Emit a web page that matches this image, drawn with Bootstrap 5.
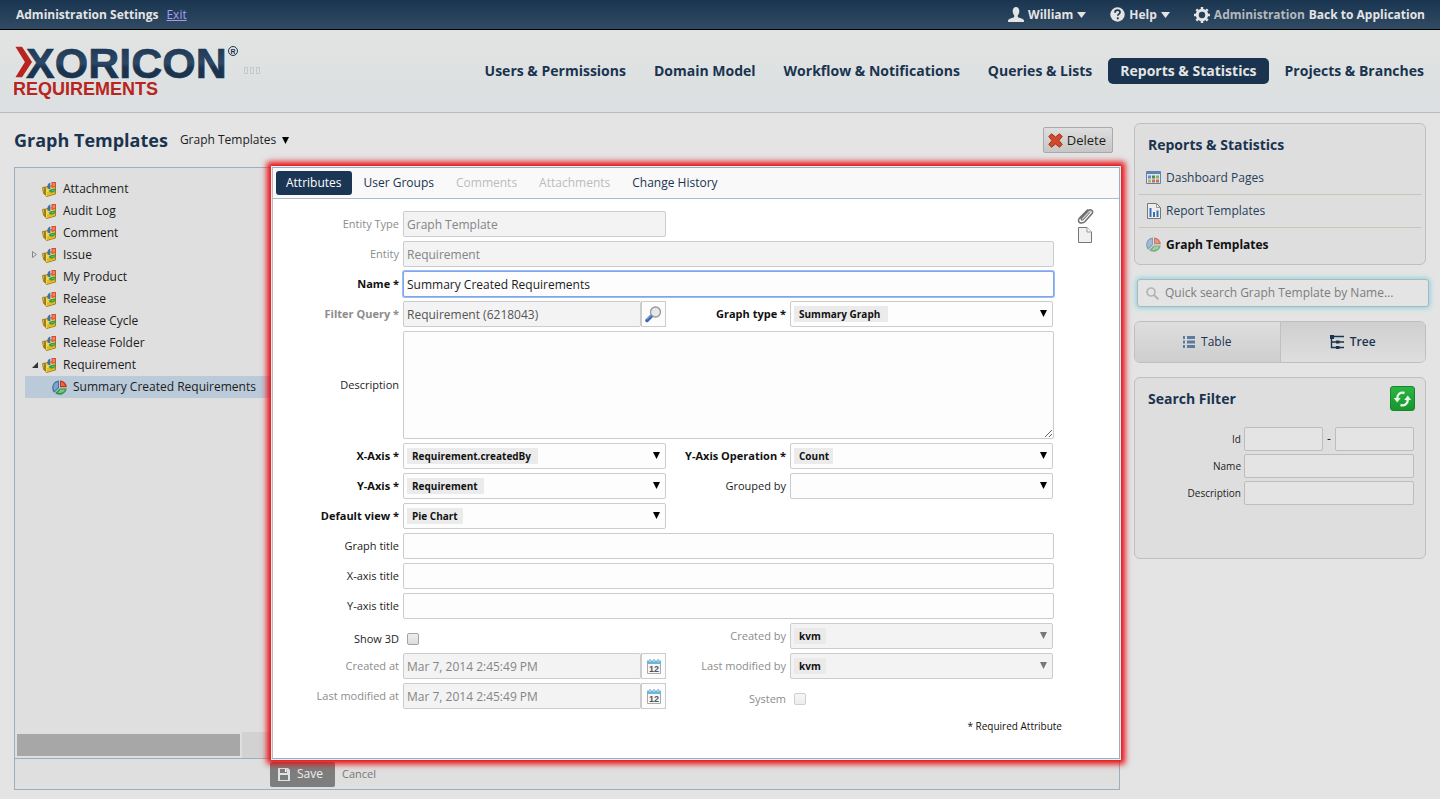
<!DOCTYPE html>
<html lang="en">
<head>
<meta charset="utf-8">
<meta name="viewport" content="width=device-width, initial-scale=1">
<title>Graph Templates</title>
<link href="https://cdn.jsdelivr.net/npm/bootstrap@5.3.0/dist/css/bootstrap.min.css" rel="stylesheet">
<style>
  :root { --navy:#1a3450; --line:#9bafbe; --edge:#bfbfbf; }
  body { font-family:"Open Sans","Noto Sans",sans-serif; font-size:12px; line-height:18px; background:#e4e4e4; color:#1c1c1c; }
  a { text-decoration:none; color:inherit; }
  button { font-family:inherit; }
  svg { flex:none; display:block; }

  .top-strip { height:30px; padding:0 15px 0 16px; font-weight:700; color:#e4e4e4; background:linear-gradient(#1a3550,#314b64); border-bottom:1px solid #000; }
  .exit-link { color:#a79df0; text-decoration:underline; font-weight:400; }
  .menu-btn { border:0; background:none; padding:0; color:inherit; font-weight:700; font-size:12px; line-height:18px; }
  .dim { color:#b5b9bd; }

  .masthead { height:83px; padding:0 4px 0 14px; background:linear-gradient(#e2e4e2,#dbdfe1); border-bottom:1px solid #b9babb; }
  .main-nav { gap:4px; }
  .main-nav .nav-link { padding:3px 12px; font-size:14px; line-height:20px; font-weight:700; color:var(--navy); border-radius:5px; white-space:nowrap; }
  .main-nav .nav-link.active { background:var(--navy); color:#e4e4e4; }

  .page-body { padding:0 14px 9px; gap:14px; }
  .title-row { height:54px; padding-right:7px; gap:12px; }
  .page-title { font-size:18px; line-height:24px; font-weight:700; color:var(--navy); margin:0; }
  .crumb-btn { border:0; background:none; padding:0; color:#1c1c1c; font-size:12px; line-height:18px; gap:6px; }
  .delete-btn { height:26px; padding:0 6px 0 4px; gap:4px; border:1px solid #a9a9a9; border-radius:2px; background:linear-gradient(#dedede,#c6c6c6); color:#1c1c1c; font-size:13px; }

  .workspace { border:1px solid var(--line); background:#dfdfdf; }
  .panes { min-height:590px; }
  .tree-pane { width:257px; }
  .tree-list { padding:10px 0 0 10px; }
  .tree-item { height:22px; gap:6px; padding-left:3px; white-space:nowrap; }
  .tree-item .twist { width:11px; margin-right:-3px; }
  .tree-item.leaf { padding-left:27px; background:#bacad9; }
  .scroll-track { height:26px; padding:2px; }
  .scroll-thumb { width:223px; height:22px; background:#a7a7a7; }
  .scroll-rest { background:#d2d2d2; margin:-2px -2px -2px 2px; }

  .editor { position:relative; z-index:1; margin:-1px -1px -1px 0; border:1px solid var(--line); border-left-color:#bbb; background:#fff; box-shadow:0 0 0 1px #e8eef2, 0 0 6px 5px #e80a0e; }
  .tab-strip { height:31px; padding:3px; gap:2px; background:#f9f9f9; border-bottom:1px solid #a9bdcb; }
  .tab-strip .nav-link { height:24px; padding:3px 10px; color:var(--navy); border-radius:3px; font-size:12px; line-height:18px; }
  .tab-strip .nav-link.active { background:#1b3654; color:#fff; }
  .tab-strip .nav-link.disabled { color:#bcbcbc; }
  .form-area { padding:12px 24px 12px 0; gap:23px; }
  .entry-grid { display:grid; grid-template-columns:130px minmax(0,263fr) 124px minmax(0,264fr); row-gap:4px; align-items:center; }
  .entry-grid label { font-size:11px; line-height:16px; text-align:right; padding-right:4px; color:#1c1c1c; white-space:nowrap; }
  .entry-grid label.req { font-weight:700; color:#111; }
  .entry-grid label.off { color:#8c8c8c; }
  .wide { grid-column:2 / -1; }
  .first { grid-column:1; }
  .box { width:100%; height:26px; border:1px solid #ccc; border-radius:2px; padding:2px 3px; background-color:#fdfdfd; font-size:12px; line-height:18px; color:#1c1c1c; }
  textarea.box { height:108px; display:block; }
  .box.locked { background-color:#f3f3f3; color:#858585; opacity:1; }
  .box.query { color:#555; }
  .box.focused, .box.focused:focus { border-color:#7da6ee; box-shadow:0 0 0 1px #9dbcf3; outline:0; }
  select.box { appearance:none; padding:0 20px 0 8px; font-size:10px; font-weight:700; color:#111; opacity:1;
    background-image:url("data:image/svg+xml,%3Csvg xmlns='http://www.w3.org/2000/svg' width='7' height='8'%3E%3Cpath d='M0 1h7L3.500 8z' fill='%23000'/%3E%3C/svg%3E"),linear-gradient(#ebebeb,#ebebeb);
    background-repeat:no-repeat; background-position:right 5px top 7px,3px 4px; background-size:7px 8px,var(--chip,0) 16px; }
  select.box.locked { color:#111; background-image:url("data:image/svg+xml,%3Csvg xmlns='http://www.w3.org/2000/svg' width='7' height='8'%3E%3Cpath d='M0 1h7L3.500 8z' fill='%23777'/%3E%3C/svg%3E"),linear-gradient(#eaeaea,#eaeaea); }
  .short { margin-right:1px; width:auto; }
  .side-btn { width:25px; height:26px; padding:0; border:1px solid #ccc; background:#fcfcfc; flex:none; }
  .tick { appearance:none; display:block; width:12px; height:12px; margin:6px 0 0 4px; border:1px solid #a3a3a3; border-radius:2px; background:linear-gradient(#eee,#dcdcdc); }
  .tick.off { border-color:#cfcfcf; background:linear-gradient(#f7f7f7,#ededed); }
  .low { padding-top:6px; }
  .note { font-size:10px; line-height:16px; text-align:right; margin:9px -8px 0 0; color:#111; }
  .side-tools { margin-top:-3px; gap:3px; }
  .icon-btn { border:0; background:none; padding:0; }

  .action-bar { height:31px; border-top:1px solid var(--line); padding-left:255px; }
  .save-btn { height:25px; width:65px; padding:0 8px; gap:7px; border:0; border-radius:2px; background:#7d7d7d; color:#eee; font-size:12px; }
  .cancel-link { color:#777; font-size:11px; margin-left:7px; }

  .side-col { width:292px; padding-top:10px; gap:14px; flex:none; }
  .panel { border:1px solid var(--edge); border-radius:6px; background:#dedede; }
  .panel h2 { font-size:14px; line-height:20px; font-weight:700; color:var(--navy); margin:0; }
  .menu-panel { padding:11px 3px 3px; }
  .menu-panel h2 { padding-left:10px; margin-bottom:7px; }
  .side-link { height:33px; gap:5px; padding-left:8px; font-size:12px; color:#27415a; border-bottom:1px solid #c6c6b9; }
  .side-link:last-child { border-bottom:0; }
  .side-link.current { font-weight:700; color:#111; }
  .quick { margin:0 -3px 0 3px; height:28px; padding:0 8px; gap:6px; border:1px solid #b5b5b5; border-radius:3px; background:#e4e4e4; box-shadow:0 0 5px 1px #7ed6e2; }
  .quick input { flex:1; min-width:0; border:0; background:none; padding:0; outline:0; font-size:12px; }
  .quick input::placeholder { color:#7d7d7d; opacity:1; }
  .switcher { height:42px; overflow:hidden; }
  .switcher button { border:0; flex:1; gap:6px; font-size:12px; color:var(--navy); background:linear-gradient(#dedede,#cecece); }
  .switcher button + button { border-left:1px solid #c0c0c0; background:linear-gradient(#cfcfcf,#dedede); font-weight:600; }
  .filter { height:182px; padding:8px 11px 8px 13px; }
  .filter-grid { display:grid; grid-template-columns:96px minmax(0,1fr); row-gap:3px; margin-top:16px; align-items:center; }
  .filter-grid label { font-size:10px; line-height:16px; text-align:right; padding-right:3px; }
  .filter-grid input { width:100%; min-width:0; height:24px; border:1px solid #bdbdbd; border-radius:2px; background:#e4e4e4; padding:0 3px; }
  .refresh-btn { width:25px; height:25px; padding:0; margin-right:-1px; border:1px solid #17862a; border-radius:3px; background:linear-gradient(#2bb544,#17972c); }
</style>
</head>
<body>
<svg width="0" height="0" class="position-absolute" aria-hidden="true">
  <defs>
    <symbol id="folder" viewBox="0 0 15 15">
      <path d="M.5 5.500 2.500 5v7.500L1.500 11z" fill="#e8c75a" stroke="#a37c14"/>
      <path d="M3.500 5 13.500 3v9L4.500 14.500l-1-1z" fill="#f0d75e" stroke="#a37c14"/>
      <path d="M5 10.500 13 8.500v3L5 13.800z" fill="#dfb922"/>
      <path d="M8.300.5v7L5.500 6.500C4.800 3.500 6 1.200 8.300.5z" fill="#3f72ab"/>
      <path d="M9.500 0H14v5L9.500 6z" fill="#dc4b2c"/>
      <path d="M10.500 1H13v3l-2.500.7z" fill="#ee8266"/>
      <path d="M6.500 8.700 9.500 7l4.500-.7c0 2.400-2 4.200-4.200 4.200-1.400 0-2.600-.6-3.300-1.800z" fill="#339a46"/>
      <path d="M9 8.700 12.500 7.500c-.5 1.200-1.700 1.900-3.500 1.200z" fill="#7fd08a"/>
    </symbol>
    <symbol id="pie" viewBox="0 0 15 15">
      <path d="M7 .5v7.200l-4.700 5A7.200 7.200 0 0 1 7 .5z" fill="#41719f"/>
      <path d="M6 2v5.200L2.500 11A5.500 5.500 0 0 1 6 2z" fill="#7aa5cc"/>
      <path d="M8 .5A6.500 6.500 0 0 1 14.700 7.200H8z" fill="#c63519"/>
      <path d="M9 2a5 5 0 0 1 4 4H9z" fill="#e8694a"/>
      <path d="M7.700 8.500h7A7.200 7.200 0 0 1 3.200 13.200z" fill="#35904a"/>
      <path d="M8.500 9.500H13A5 5 0 0 1 6 12.500z" fill="#79c780"/>
    </symbol>
    <symbol id="cal" viewBox="0 0 14 15">
      <path d="M.5 2.500h13v12H.5z" fill="#f6f6f6" stroke="#a9a9a9"/>
      <path d="M0 1.500h14V5H0z" fill="#6db6d8"/>
      <path d="M3 0v3M7 0v3M11 0v3" stroke="#a5c9da" stroke-width="2"/>
      <text x="7" y="13" text-anchor="middle" font-family="Liberation Sans" font-size="9" font-weight="700" fill="#555">12</text>
    </symbol>
    <symbol id="caret" viewBox="0 0 9 7"><path d="M0 0h9L4.500 7z" fill="currentColor"/></symbol>
  </defs>
</svg>

<header>
  <div class="top-strip d-flex align-items-center">
    <span>Administration Settings</span><a href="#" class="exit-link ms-2">Exit</a>
    <div class="ms-auto d-flex align-items-center">
      <button class="menu-btn d-flex align-items-center gap-1" type="button">
        <svg width="16" height="16" viewBox="0 0 16 16"><path d="M8 0c2.200 0 3.300 1.700 3.300 4 0 2-.7 3.500-1.500 4.300v1.900l4.400 1.600c1.200.5 1.800 1.200 1.800 2.200v1H0v-1c0-1 .6-1.700 1.800-2.200l4.400-1.600V8.300C5.400 7.500 4.700 6 4.700 4 4.700 1.700 5.800 0 8 0z" fill="#e4e4e4"/></svg>
        William <svg width="9" height="6" viewBox="0 0 9 6"><path d="M0 0h9L4.500 6z" fill="currentColor"/></svg>
      </button>
      <button class="menu-btn d-flex align-items-center gap-1 ms-4" type="button">
        <svg width="15" height="15" viewBox="0 0 16 16"><circle cx="8" cy="8" r="7.700" fill="#e4e4e4"/><path d="M5.300 6c0-1.700 1.100-2.600 2.700-2.600s2.700.9 2.700 2.300c0 1.900-2.400 1.900-2.400 3.600" fill="none" stroke="#1f3a55" stroke-width="1.800"/><circle cx="8.300" cy="12" r="1.200" fill="#1f3a55"/></svg>
        Help <svg width="9" height="6" viewBox="0 0 9 6"><path d="M0 0h9L4.500 6z" fill="currentColor"/></svg>
      </button>
      <svg class="ms-4 me-1" width="16" height="16" viewBox="0 0 16 16"><circle cx="8" cy="8" r="4.700" fill="none" stroke="#e4e4e4" stroke-width="3"/><path d="M8 0v3M8 13v3M0 8h3M13 8h3M2.300 2.300l2 2M11.700 11.700l2 2M2.300 13.700l2-2M11.700 4.300l2-2" stroke="#e4e4e4" stroke-width="2.500"/></svg>
      <span class="dim me-1">Administration</span><a href="#">Back to Application</a>
    </div>
  </div>

  <div class="masthead d-flex align-items-center justify-content-between">
    <svg width="250" height="74" viewBox="0 -9 250 74" role="img" aria-label="Xoricon Requirements">
      <defs><linearGradient id="lg" x1="0" y1="0" x2="0" y2="1"><stop offset="0" stop-color="#17304b"/><stop offset=".5" stop-color="#2c4966"/><stop offset=".6" stop-color="#1a3450"/></linearGradient></defs>
      <text x="12" y="35" font-family="Liberation Sans" font-weight="700" font-size="43" fill="url(#lg)" stroke="#1a3450" stroke-width=".6">XORICON</text>
      <path d="M0 3h8.500l10.500 16L8.500 35H0l10-16z" fill="#b82420" stroke="#e2e4e2" stroke-width="1.500"/>
      <text x="-1" y="52" font-family="Liberation Sans" font-weight="700" font-size="18" fill="#b82420">REQUIREMENTS</text>
      <circle cx="219" cy="8" r="4.500" fill="none" stroke="#1a3450"/><text x="219" y="11" text-anchor="middle" font-family="Liberation Sans" font-size="7" font-weight="700" fill="#1a3450">R</text>
      <path d="M230.500 24.500h3v6h-3zM236.500 24.500h3v6h-3zM242.500 24.500h3v6h-3z" fill="none" stroke="#c5c7c7"/>
    </svg>
    <nav>
      <ul class="nav main-nav flex-nowrap">
        <li><a class="nav-link" href="#">Users &amp; Permissions</a></li>
        <li><a class="nav-link" href="#">Domain Model</a></li>
        <li><a class="nav-link" href="#">Workflow &amp; Notifications</a></li>
        <li><a class="nav-link" href="#">Queries &amp; Lists</a></li>
        <li><a class="nav-link active" href="#">Reports &amp; Statistics</a></li>
        <li><a class="nav-link" href="#">Projects &amp; Branches</a></li>
      </ul>
    </nav>
  </div>
</header>

<div class="page-body d-flex align-items-start">
  <main class="flex-grow-1">
    <div class="title-row d-flex align-items-center">
      <h1 class="page-title">Graph Templates</h1>
      <button class="crumb-btn d-flex align-items-center" type="button">Graph Templates <svg width="7" height="7" viewBox="0 0 7 7"><path d="M0 0h7L3.500 7z"/></svg></button>
      <button class="delete-btn d-flex align-items-center ms-auto" type="button">
        <svg width="15" height="15" viewBox="0 0 15 15"><path d="M3.500.8 7.500 4l4-3.200 2.700 2.700L11 7.500l3.200 4-2.700 2.700-4-3.200-4 3.200L.8 11.500 4 7.500.8 3.500z" fill="#d2492a" stroke="#a32d16" stroke-linejoin="round"/></svg>Delete</button>
    </div>

    <div class="workspace">
      <div class="panes d-flex">
        <div class="tree-pane d-flex flex-column flex-shrink-0">
          <div class="tree-list flex-grow-1" role="tree">
            <div class="tree-item d-flex align-items-center" role="treeitem"><span class="twist"></span><svg width="15" height="15"><use href="#folder"/></svg>Attachment</div>
            <div class="tree-item d-flex align-items-center" role="treeitem"><span class="twist"></span><svg width="15" height="15"><use href="#folder"/></svg>Audit Log</div>
            <div class="tree-item d-flex align-items-center" role="treeitem"><span class="twist"></span><svg width="15" height="15"><use href="#folder"/></svg>Comment</div>
            <div class="tree-item d-flex align-items-center" role="treeitem"><span class="twist"><svg width="8" height="8" class="ms-1"><path d="M.5.500v6L4.500 3.500z" fill="none" stroke="#888"/></svg></span><svg width="15" height="15"><use href="#folder"/></svg>Issue</div>
            <div class="tree-item d-flex align-items-center" role="treeitem"><span class="twist"></span><svg width="15" height="15"><use href="#folder"/></svg>My Product</div>
            <div class="tree-item d-flex align-items-center" role="treeitem"><span class="twist"></span><svg width="15" height="15"><use href="#folder"/></svg>Release</div>
            <div class="tree-item d-flex align-items-center" role="treeitem"><span class="twist"></span><svg width="15" height="15"><use href="#folder"/></svg>Release Cycle</div>
            <div class="tree-item d-flex align-items-center" role="treeitem"><span class="twist"></span><svg width="15" height="15"><use href="#folder"/></svg>Release Folder</div>
            <div class="tree-item d-flex align-items-center" role="treeitem"><span class="twist"><svg width="7" height="7" class="ms-1"><path d="M6 0v6H0z" fill="#333"/></svg></span><svg width="15" height="15"><use href="#folder"/></svg>Requirement</div>
            <div class="tree-item leaf d-flex align-items-center" role="treeitem" aria-selected="true"><svg width="15" height="15"><use href="#pie"/></svg>Summary Created Requirements</div>
          </div>
          <div class="scroll-track d-flex"><div class="scroll-thumb"></div><div class="scroll-rest flex-grow-1"></div></div>
        </div>

        <section class="editor flex-grow-1">
          <div class="tab-strip nav flex-nowrap">
            <a class="nav-link active" href="#">Attributes</a>
            <a class="nav-link" href="#">User Groups</a>
            <a class="nav-link disabled" href="#" aria-disabled="true">Comments</a>
            <a class="nav-link disabled" href="#" aria-disabled="true">Attachments</a>
            <a class="nav-link" href="#">Change History</a>
          </div>
          <div class="form-area d-flex align-items-start">
            <form class="flex-grow-1">
              <div class="entry-grid">
                <label class="off" for="etype">Entity Type</label>
                <div><input class="box locked" id="etype" value="Graph Template" disabled></div>
                <label class="off first" for="entity">Entity</label>
                <div class="wide"><input class="box locked" id="entity" value="Requirement" disabled></div>
                <label class="req" for="name">Name *</label>
                <div class="wide"><input class="box focused" id="name" value="Summary Created Requirements" autofocus></div>

                <label class="req off" for="query">Filter Query *</label>
                <div class="d-flex"><input class="box locked query" id="query" value="Requirement (6218043)" readonly>
                  <button class="side-btn d-flex align-items-center justify-content-center" type="button" aria-label="Find query"><svg width="17" height="17" viewBox="0 0 17 17"><path d="M6.500 10 2 14.500" stroke="#3468b4" stroke-width="3.500" stroke-linecap="round"/><path d="M6 9.500 1.800 13.500" stroke="#8db4e4" stroke-width="1"/><circle cx="10.500" cy="6" r="5" fill="#e4e8ec" stroke="#9a9a9a" stroke-width="1.400"/></svg></button></div>
                <label class="req" for="gtype">Graph type *</label>
                <select class="box short" id="gtype" style="--chip:94px"><option>Summary Graph</option></select>

                <label for="descr">Description</label>
                <div class="wide"><textarea class="box" id="descr"></textarea></div>

                <label class="req" for="xaxis">X-Axis *</label>
                <select class="box" id="xaxis" style="--chip:131px"><option>Requirement.createdBy</option></select>
                <label class="req" for="yop">Y-Axis Operation *</label>
                <select class="box short" id="yop" style="--chip:39px"><option>Count</option></select>
                <label class="req" for="yaxis">Y-Axis *</label>
                <select class="box" id="yaxis" style="--chip:77px"><option>Requirement</option></select>
                <label for="grouped">Grouped by</label>
                <select class="box short" id="grouped"><option></option></select>
                <label class="req" for="view">Default view *</label>
                <select class="box" id="view" style="--chip:56px"><option>Pie Chart</option></select>

                <label class="first" for="gtitle">Graph title</label>
                <div class="wide"><input class="box" id="gtitle"></div>
                <label for="xtitle">X-axis title</label>
                <div class="wide"><input class="box" id="xtitle"></div>
                <label for="ytitle">Y-axis title</label>
                <div class="wide"><input class="box" id="ytitle"></div>

                <label class="low" for="show3d">Show 3D</label>
                <div><input class="tick" type="checkbox" id="show3d"></div>
                <label class="off" for="cby">Created by</label>
                <select class="box locked short" id="cby" style="--chip:32px" disabled><option>kvm</option></select>
                <label class="off" for="cat">Created at</label>
                <div class="d-flex"><input class="box locked" id="cat" value="Mar 7, 2014 2:45:49 PM" disabled>
                  <button class="side-btn d-flex align-items-center justify-content-center" type="button" aria-label="Pick date"><svg width="14" height="15"><use href="#cal"/></svg></button></div>
                <label class="off" for="mby">Last modified by</label>
                <select class="box locked short" id="mby" style="--chip:32px" disabled><option>kvm</option></select>
                <label class="off" for="mat">Last modified at</label>
                <div class="d-flex"><input class="box locked" id="mat" value="Mar 7, 2014 2:45:49 PM" disabled>
                  <button class="side-btn d-flex align-items-center justify-content-center" type="button" aria-label="Pick date"><svg width="14" height="15"><use href="#cal"/></svg></button></div>
                <label class="off low" for="system">System</label>
                <div><input class="tick off" type="checkbox" id="system" disabled></div>
              </div>
              <p class="note">* Required Attribute</p>
            </form>
            <div class="side-tools d-flex flex-column">
              <button class="icon-btn" type="button" aria-label="Attach file"><svg width="18" height="16" viewBox="0 0 18 16"><path d="M13 4 6 11.500c-.8.900-2.400-.4-1.500-1.500l7-7.500c1.800-2 5.300.7 3.600 3L8 13.500c-2 2-6.500 2.200-6.500-1C1.500 11.500 2 10.500 3 9.500L11 1.500" fill="none" stroke="#6e6e6e" stroke-width="1.500"/><path d="M4 13 13.500 3.500" stroke="#aaa"/></svg></button>
              <button class="icon-btn" type="button" aria-label="New note"><svg width="16" height="16" viewBox="0 0 16 16"><path d="M1.500.500H10L14.500 5v10.500h-13z" fill="#f1f1f1" stroke="#777"/><path d="M10 .5V5h4.500" fill="#fff" stroke="#999"/></svg></button>
            </div>
          </div>
        </section>
      </div>
      <div class="action-bar d-flex align-items-center">
        <button class="save-btn d-flex align-items-center" type="button"><svg width="12" height="13" viewBox="0 0 12 13"><path d="M0 0h10l2 2v11H0z" fill="#dfe3e8"/><path d="M2 1h7v4H2zM2 7h8v5H2z" fill="#7d7d7d"/><path d="M7 1h1.500v3H7z" fill="#fff"/></svg>Save</button>
        <a class="cancel-link" href="#">Cancel</a>
      </div>
    </div>
  </main>

  <aside class="side-col d-flex flex-column">
    <div class="panel menu-panel">
      <h2>Reports &amp; Statistics</h2>
      <nav>
        <a class="side-link d-flex align-items-center" href="#"><svg width="15" height="14" viewBox="0 0 15 14"><path d="M.5.500h14v12H.5z" fill="#dfe6ee" stroke="#5b85b5"/><path d="M1 1h13v2H1z" fill="#5b85b5"/><path d="M2 4.500h3v3H2z" fill="#5f93b8"/><path d="M6 4.500h3v3H6z" fill="#4d8a50"/><path d="M10 4.500h3v3h-3z" fill="#8fae5c"/><path d="M2 8.500h3v3H2z" fill="#d9a84c"/><path d="M6 8.500h3v3H6zM10 8.500h3v3h-3z" fill="#cc7050"/></svg>Dashboard Pages</a>
        <a class="side-link d-flex align-items-center" href="#"><svg width="15" height="16" viewBox="0 0 15 16"><path d="M1.500.500h9l4 4v11h-13z" fill="#eee" stroke="#777"/><path d="M10.500.500v4h4" fill="none" stroke="#999"/><path d="M3.500 5h2v9h-2zM7 9h2v5H7zM10.500 7.500h2V14h-2z" fill="#3a6fb5"/></svg>Report Templates</a>
        <a class="side-link current d-flex align-items-center" href="#"><svg width="15" height="15" opacity=".6"><use href="#pie"/></svg>Graph Templates</a>
      </nav>
    </div>
    <div class="quick d-flex align-items-center">
      <svg width="13" height="13" viewBox="0 0 13 13"><circle cx="5" cy="5" r="4" fill="none" stroke="#b4b4b4" stroke-width="1.700"/><path d="m8 8 4.300 4.300" stroke="#b4b4b4" stroke-width="2"/></svg>
      <input type="search" aria-label="Quick search" placeholder="Quick search Graph Template by Name...">
    </div>
    <div class="panel switcher d-flex">
      <button class="d-flex align-items-center justify-content-center" type="button"><svg width="12" height="12"><path d="M0 0h2v3H0zM0 4.500h2v3H0zM0 9h2v3H0zM4 0h8v3H4zM4 4.500h8v3H4zM4 9h8v3H4z" fill="#5c7b9f"/></svg>Table</button>
      <button class="d-flex align-items-center justify-content-center" type="button"><svg width="14" height="14"><path d="M0 0h4v4H0z" fill="#1a3450"/><path d="M4 1.500h10M1.500 4v8.500H14M1.500 7H14" fill="none" stroke="#1a3450" stroke-width="1.400"/><path d="M6 5.500h3.500v3H6zM6 11h3.500v3H6z" fill="#1a3450"/></svg>Tree</button>
    </div>
    <div class="panel filter">
      <div class="d-flex align-items-center justify-content-between"><h2>Search Filter</h2>
        <button class="refresh-btn d-flex align-items-center justify-content-center" type="button" aria-label="Refresh"><svg width="19" height="16" viewBox="0 0 19 16"><path d="M11.500 2C7.500.8 4.200 3 4.200 7.500M7.500 14c4 1.200 7.300-1 7.300-5.500" fill="none" stroke="#e8f4ea" stroke-width="2.400"/><path d="M.8 7h7L4.200 11.500zM11.200 9h7L14.800 4.500z" fill="#e8f4ea"/></svg></button></div>
      <div class="filter-grid">
        <label for="id1">Id</label><div class="d-flex align-items-center gap-1"><input id="id1"><span>-</span><input id="id2" aria-label="Id to"></div>
        <label for="fname">Name</label><input id="fname">
        <label for="fdesc">Description</label><input id="fdesc">
      </div>
    </div>
  </aside>
</div>
<script src="https://cdn.jsdelivr.net/npm/bootstrap@5.3.0/dist/js/bootstrap.bundle.min.js"></script>
<script>
  const nameBox = document.getElementById('name');
  nameBox.focus();
  nameBox.setSelectionRange(nameBox.value.length, nameBox.value.length);
</script>
</body>
</html>
